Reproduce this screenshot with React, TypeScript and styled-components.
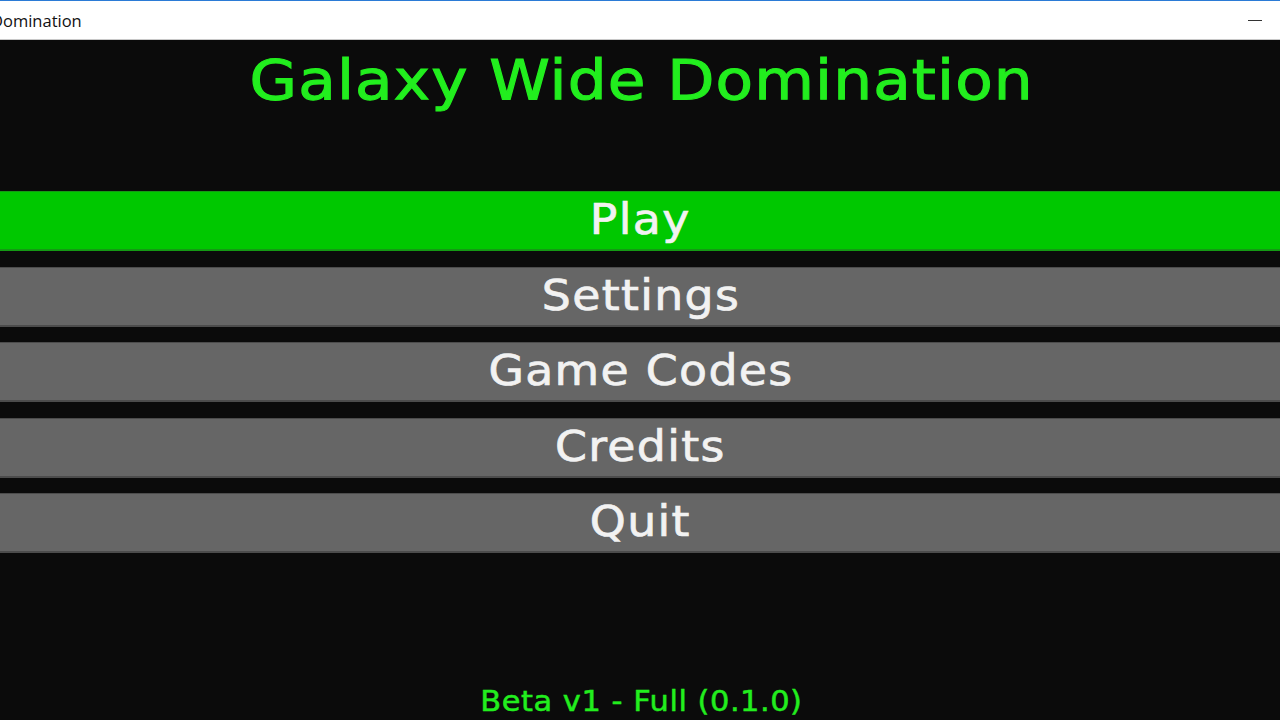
import React from "react";
import styled, { createGlobalStyle } from "styled-components";

const Global = createGlobalStyle`
  html, body { margin: 0; padding: 0; background: #0b0b0b; }
  #root { height: 720px; }
`;

const Window = styled.div`
  height: 720px;
  display: flex;
  flex-direction: column;
  overflow: hidden;
  background: #0b0b0b;
`;

const TitleBar = styled.div`
  height: 38px;
  flex: none;
  background: #ffffff;
  border-top: 1px solid #2b7bd6;
  border-bottom: 1px solid #c8c8c8;
  display: flex;
  align-items: center;
  justify-content: space-between;
  padding-right: 18px;
  font-family: "Open Sans", "Noto Sans", sans-serif;
  font-size: 16.5px;
  color: #111;
`;

const WindowTitle = styled.span`
  margin-left: -9px;
`;

const Minimize = styled.span`
  width: 14px;
  height: 1px;
  background: #333;
`;

const Content = styled.main`
  flex: 1;
  display: flex;
  flex-direction: column;
  align-items: stretch;
`;

const Wide = styled.span<{ $scale: number }>`
  display: inline-block;
  transform: scaleX(${(p) => p.$scale});
  transform-origin: center;
`;

const GameTitle = styled.h1`
  margin: 0;
  height: 151px;
  padding-left: 3px;
  text-align: center;
  font-family: "DejaVu Sans", sans-serif;
  font-weight: normal;
  font-size: 55px;
  letter-spacing: 1px;
  line-height: 80px;
  color: #22ee1e;
  -webkit-text-stroke: 1.1px #22ee1e;
`;

const Menu = styled.nav`
  display: flex;
  flex-direction: column;
  gap: 15.5px;
`;

const MenuButton = styled.button<{ $active?: boolean }>`
  height: 60px;
  box-sizing: border-box;
  margin: 0;
  padding: 0 0 2px 1px;
  width: 100%;
  border: none;
  border-top: 1px solid ${(p) => (p.$active ? "#149a14" : "#4c4c4c")};
  border-bottom: 2px solid ${(p) => (p.$active ? "#149a14" : "#4c4c4c")};
  background: ${(p) => (p.$active ? "#00c800" : "#666666")};
  color: #f2f2f2;
  font-family: "DejaVu Sans", sans-serif;
  font-size: 42px;
  letter-spacing: 1.2px;
  -webkit-text-stroke: 0.7px #f2f2f2;
  cursor: pointer;
`;

const Footer = styled.div`
  margin-top: auto;
  height: 34px;
  padding-left: 2px;
  text-align: center;
  font-family: "DejaVu Sans", sans-serif;
  font-size: 29px;
  letter-spacing: 0.5px;
  line-height: 30px;
  color: #22ee1e;
  -webkit-text-stroke: 0.5px #22ee1e;
`;

const items = ["Play", "Settings", "Game Codes", "Credits", "Quit"];

export default function App() {
  return (
    <>
      <Global />
      <Window>
        <TitleBar>
          <WindowTitle>Domination</WindowTitle>
          <Minimize />
        </TitleBar>
        <Content>
          <GameTitle>
            <Wide $scale={1.115}>Galaxy Wide Domination</Wide>
          </GameTitle>
          <Menu>
            {items.map((label, i) => (
              <MenuButton key={label} $active={i === 0}>
                <Wide $scale={1.09}>{label}</Wide>
              </MenuButton>
            ))}
          </Menu>
          <Footer>
            <Wide $scale={1.05}>Beta v1 - Full (0.1.0)</Wide>
          </Footer>
        </Content>
      </Window>
    </>
  );
}
